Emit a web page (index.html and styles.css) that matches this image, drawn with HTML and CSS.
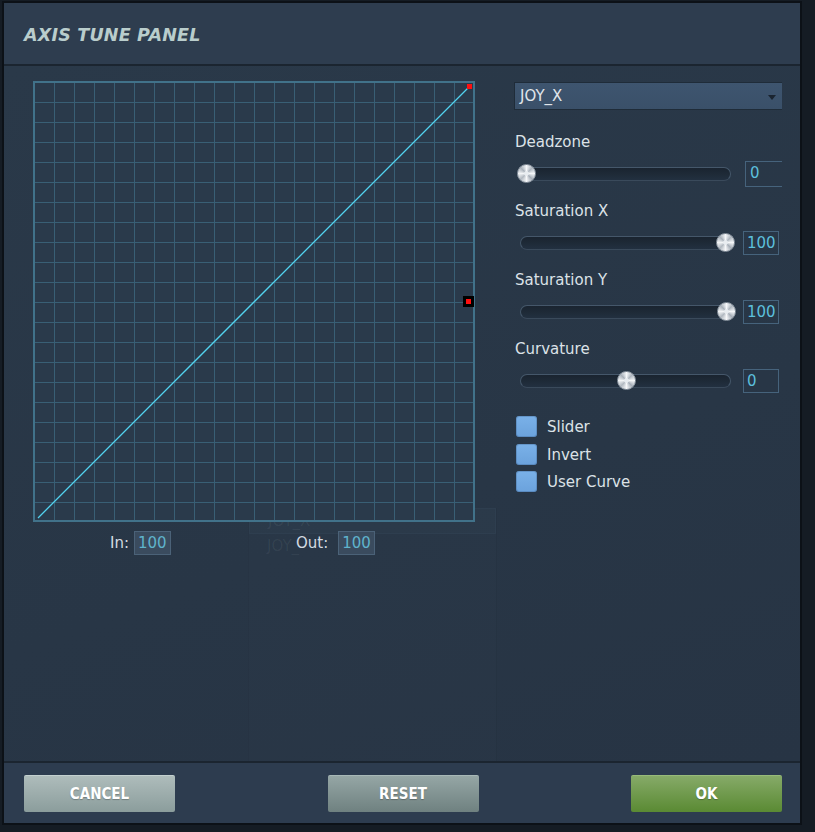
FILE: index.html
```html
<!DOCTYPE html>
<html lang="en">
<head>
    <meta charset="UTF-8">
    <meta name="viewport" content="width=device-width, initial-scale=1.0">
    <title>Axis Tune Panel</title>
    <link rel="stylesheet" href="styles.css">
</head>
<body>
    <div class="panel">
        <div class="panel-title">
            <h2>AXIS TUNE PANEL</h2>
        </div>

        <div class="panel-body">
            <!-- faint list bleeding through from the window behind -->
            <div class="ghost ghost-rz">JOY_RZ</div>
            <div class="ghost-list">
                <div class="ghost-row">JOY_X</div>
                <div class="ghost-row">JOY_</div>
            </div>

            <div class="curve-col">
                <div class="graph">
                    <svg class="curve" width="438" height="437" viewBox="0 0 438 437">
                        <line x1="3" y1="435" x2="434" y2="4" stroke="#52d2ee" stroke-width="1.3" />
                        <rect x="432" y="1" width="5" height="5" fill="#ff1010" />
                    </svg>
                    <div class="marker"><span></span></div>
                </div>
                <div class="io-row">
                    <label class="io-label in-label">In:</label>
                    <div class="io-box">100</div>
                    <label class="io-label out-label">Out:</label>
                    <div class="io-box">100</div>
                </div>
            </div>

            <div class="settings-col">
                <div class="select">
                    <span>JOY_X</span>
                    <i class="caret"></i>
                </div>

                <div class="setting first">
                    <div class="setting-label">Deadzone</div>
                    <div class="slider-row">
                        <div class="track track-wide"><div class="knob" style="left: -1px"></div></div>
                        <div class="value value-clip">0</div>
                    </div>
                </div>

                <div class="setting">
                    <div class="setting-label">Saturation X</div>
                    <div class="slider-row">
                        <div class="track"><div class="knob" style="left: 195px"></div></div>
                        <div class="value">100</div>
                    </div>
                </div>

                <div class="setting">
                    <div class="setting-label">Saturation Y</div>
                    <div class="slider-row">
                        <div class="track"><div class="knob" style="left: 196px"></div></div>
                        <div class="value">100</div>
                    </div>
                </div>

                <div class="setting">
                    <div class="setting-label">Curvature</div>
                    <div class="slider-row">
                        <div class="track"><div class="knob" style="left: 96px"></div></div>
                        <div class="value">0</div>
                    </div>
                </div>

                <div class="checks">
                    <div class="check"><span class="box"></span>Slider</div>
                    <div class="check"><span class="box"></span>Invert</div>
                    <div class="check"><span class="box"></span>User Curve</div>
                </div>
            </div>
        </div>

        <div class="panel-footer">
            <button class="btn btn-cancel">CANCEL</button>
            <button class="btn btn-reset">RESET</button>
            <button class="btn btn-ok">OK</button>
        </div>
    </div>
</body>
</html>
```

FILE: styles.css
```css
body {
    margin: 0;
    background: #151c24;
    font-family: 'DejaVu Sans', 'Liberation Sans', sans-serif;
    overflow: hidden;
}

.panel {
    margin: 1px 0 0 2px;
    width: 800px;
    height: 824px;
    border: 2px solid #0c1117;
    box-sizing: border-box;
    display: flex;
    flex-direction: column;
    background: #293747;
}

.panel-title {
    height: 63px;
    flex-shrink: 0;
    background: #2e3d4f;
    border-bottom: 2px solid #1b2530;
    display: flex;
    align-items: center;
    padding-left: 20px;
    padding-top: 3px;
    box-sizing: border-box;
}

.panel-title h2 {
    margin: 0;
    font-size: 17.5px;
    font-weight: bold;
    font-style: italic;
    color: #b9cdcc;
    letter-spacing: 0.2px;
}

.panel-body {
    position: relative;
    height: 695px;
    flex-shrink: 0;
    padding: 15px 0 0 29px;
    box-sizing: border-box;
    display: flex;
    background: linear-gradient(160deg, #2a3949 0%, #283646 60%, #273444 100%);
}

/* ---- ghost list behind ---- */
.ghost {
    position: absolute;
    color: rgba(210, 220, 230, 0.06);
    font-size: 15px;
}

.ghost-rz {
    left: 264px;
    top: 208px;
}

.ghost-list {
    position: absolute;
    left: 244px;
    top: 442px;
    width: 247px;
    bottom: 0;
    background: rgba(255, 255, 255, 0.006);
    border-left: 1px solid rgba(0, 0, 0, 0.04);
    border-right: 1px solid rgba(0, 0, 0, 0.05);
}

.ghost-row {
    height: 24px;
    line-height: 24px;
    padding-left: 18px;
    font-size: 15px;
    color: rgba(210, 220, 230, 0.07);
}

.ghost-row:first-child {
    background: rgba(120, 170, 200, 0.03);
    border: 1px solid rgba(120, 170, 200, 0.045);
}

/* ---- curve graph ---- */
.curve-col {
    width: 442px;
    flex-shrink: 0;
    position: relative;
}

.graph {
    position: relative;
    width: 442px;
    height: 441px;
    box-sizing: border-box;
    border: 2px solid #41728a;
    background-color: #2a3a4b;
    background-image:
        linear-gradient(to right, transparent 19px, #395f75 19px, #395f75 21px, transparent 21px),
        linear-gradient(to bottom, transparent 19px, #395f75 19px, #395f75 21px, transparent 21px);
    background-size: 20px 20px;
}

.curve {
    position: absolute;
    left: 0;
    top: 0;
}

.marker {
    position: absolute;
    left: 428px;
    top: 213px;
    width: 11px;
    height: 11px;
    background: #000;
    display: flex;
    align-items: center;
    justify-content: center;
}

.marker span {
    width: 5px;
    height: 5px;
    background: #ff1010;
}

.io-row {
    display: flex;
    align-items: center;
    margin-top: 9px;
    height: 24px;
}

.io-label {
    color: #d3dbe1;
    font-size: 15px;
}

.in-label {
    margin-left: 77px;
    margin-right: 5px;
}

.out-label {
    margin-left: 125px;
    margin-right: 10px;
}

.io-box {
    width: 37px;
    height: 24px;
    box-sizing: border-box;
    background: #3a4b5e;
    border: 1px solid #4b6278;
    color: #5fb3cc;
    font-size: 15px;
    line-height: 22px;
    padding-left: 3px;
}

/* ---- right column ---- */
.settings-col {
    width: 268px;
    flex-shrink: 0;
    margin-left: 39px;
    overflow: hidden;
}

.select {
    margin-top: 1px;
    height: 28px;
    box-sizing: border-box;
    background: linear-gradient(#3e556f, #3a5069);
    border: 1px solid #1f2c39;
    border-right: none;
    display: flex;
    align-items: center;
    justify-content: space-between;
    padding: 0 6px 0 5px;
    color: #e0e6eb;
    font-size: 15px;
}

.caret {
    width: 0;
    height: 0;
    border-left: 4px solid transparent;
    border-right: 4px solid transparent;
    border-top: 5px solid #1a2430;
    margin-top: 2px;
}

.setting {
    margin-top: 15px;
}

.setting.first {
    margin-top: 22px;
}

.setting-label {
    height: 20px;
    line-height: 20px;
    color: #dce2e7;
    font-size: 15px;
    padding-left: 1px;
}

.slider-row {
    display: flex;
    align-items: center;
    margin-top: 9px;
    height: 25px;
}

.track {
    position: relative;
    flex-shrink: 0;
    width: 211px;
    height: 14px;
    margin-left: 6px;
    box-sizing: border-box;
    border-radius: 7px;
    background: linear-gradient(#1a2430, #1e2a37 50%, #223040);
    border: 1px solid #45576a;
    border-bottom-color: #3a4a5b;
}

.track-wide {
    margin-left: 3px;
    width: 214px;
}

.knob {
    position: absolute;
    top: -4px;
    width: 19px;
    height: 19px;
    box-sizing: border-box;
    border-radius: 50%;
    border: 1px solid #8d97a2;
    background:
        radial-gradient(circle, #e8ecf0 0, #e8ecf0 2px, transparent 3px),
        conic-gradient(#f6f8fa, #aeb6bf 45deg, #f4f6f8 90deg, #a6aeb8 135deg, #f6f7f9 180deg, #b2b9c1 225deg, #f2f4f6 270deg, #a9b1ba 315deg, #f6f8fa);
}

.value {
    width: 36px;
    height: 24px;
    margin-left: 12px;
    box-sizing: border-box;
    border: 1px solid #46637c;
    color: #5cbfdc;
    font-size: 15px;
    line-height: 22px;
    padding-left: 3px;
    flex-shrink: 0;
}

.value-clip {
    width: 44px;
    height: 26px;
    margin-left: 14px;
    padding-left: 4px;
}

.checks {
    margin-top: 23px;
}

.check {
    display: flex;
    align-items: center;
    height: 21px;
    margin-bottom: 7px;
    color: #dce2e7;
    font-size: 15px;
}

.check:nth-child(2) {
    margin-bottom: 6px;
}

.box {
    width: 21px;
    height: 21px;
    margin-left: 2px;
    margin-right: 10px;
    border-radius: 3px;
    background: linear-gradient(#7ab1e8, #6ba2dc);
    box-shadow: inset 0 0 0 1px rgba(40, 70, 110, 0.25);
}

/* ---- footer ---- */
.panel-footer {
    height: 62px;
    flex-shrink: 0;
    box-sizing: border-box;
    border-top: 2px solid #1b2530;
    background: #2d3c4f;
    display: flex;
    justify-content: space-between;
    align-items: flex-start;
    padding: 12px 18px 0 20px;
}

.btn {
    width: 151px;
    height: 37px;
    border: none;
    border-radius: 2px;
    font-family: 'DejaVu Sans Condensed', 'DejaVu Sans', sans-serif;
    font-weight: bold;
    font-size: 15px;
    color: #fff;
    text-shadow: 0 1px 1px rgba(0, 0, 0, 0.25);
    cursor: pointer;
}

.btn-cancel {
    background: linear-gradient(#aebcbb, #8b9d9c);
    border-top: 1px solid #c3d0cf;
}

.btn-reset {
    background: linear-gradient(#95a6a5, #6f8180);
    border-top: 1px solid #a8b8b7;
}

.btn-ok {
    background: linear-gradient(#86aa68, #5a8a33);
    border-top: 1px solid #98bb7a;
}
```
